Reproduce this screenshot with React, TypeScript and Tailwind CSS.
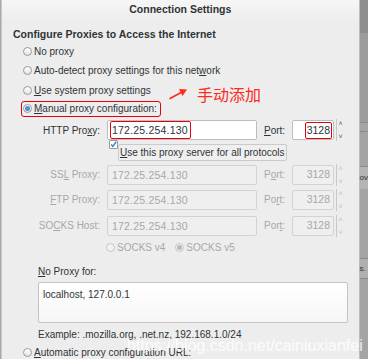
import type { ReactNode } from 'react';

const Radio = ({ on = false, dim = false }: { on?: boolean; dim?: boolean }) => (
  <span
    className={`w-[9px] h-[9px] rounded-full border shrink-0 flex items-center justify-center ${
      dim ? 'border-[#c4c4c4] bg-[#f2f2f2]' : 'border-[#9a9a9a] bg-gradient-to-b from-white to-[#e4e4e4]'
    }`}
  >
    {on && <span className={`w-[5px] h-[5px] rounded-full ${dim ? 'bg-[#b8b8b8]' : 'bg-[#4a90d9]'}`} />}
  </span>
);

const Spin = ({ dim = false }: { dim?: boolean }) => (
  <div className={`w-[8px] h-[22px] border-l border-[#c8c8c8] flex flex-col items-center justify-between text-[7px] leading-[9px] ${dim ? 'text-[#c0c0c0]' : 'text-[#555]'}`}>
    <span>˄</span>
    <span>˅</span>
  </div>
);

// Port label with its own mnemonic letter underlined
const PortLabel = ({ k }: { k: number }) => (
  <>
    {'Port:'.split('').map((c, i) =>
      i === k ? (
        <span key={i} className="underline">{c}</span>
      ) : (
        <span key={i}>{c}</span>
      )
    )}
  </>
);

function ProxyRow({ label, port, dim, red }: { label: ReactNode; port: number; dim?: boolean; red?: boolean }) {
  const txt = dim ? 'text-[#a8a8a8]' : 'text-[#2e3436]';
  const box = dim ? 'border-[#d2d2d2] bg-[#efefef]' : 'border-[#bdbdbd] bg-white';
  return (
    <div className="flex items-center h-[20px]">
      <div className={`w-[98px] text-right ${txt}`}>{label}</div>
      <div className={`ml-[7px] w-[150px] h-[20px] border rounded-[2px] ${box} flex items-center pl-[2px]`}>
        <span className={`px-[1px] leading-[16px] text-[10.5px] tracking-[0.2px] ${red ? 'border-[1.5px] border-red-600 rounded-[2px] pr-[2px]' : 'border-[1.5px] border-transparent'} ${txt}`}>
          172.25.254.130
        </span>
      </div>
      <div className={`ml-[7px] w-[28px] ${txt}`}>
        <PortLabel k={port} />
      </div>
      <div className={`w-[42px] h-[20px] border rounded-[2px] ${box} flex items-center justify-end pr-[1px]`}>
        <span className={`leading-[15px] text-[10.5px] px-[1px] ${red ? 'border-[1.5px] border-red-600 rounded-[2px]' : 'border-[1.5px] border-transparent'} ${txt}`}>
          3128
        </span>
      </div>
      <div className="ml-[2px]">
        <Spin dim={dim} />
      </div>
    </div>
  );
}

export default function App() {
  return (
    <div className="w-[368px] h-[359px] flex overflow-hidden relative bg-[#a6a6a6] font-['Liberation_Sans',Arial,sans-serif] text-[10px] text-[#2e3436]">
      <div className="w-[2px] bg-[#a9a9a9] border-r border-[#c8c8c8]" />

      {/* dialog */}
      <div className="w-[358px] bg-[#ededed] border-r border-[#bdbdbd] flex flex-col">
        <div className="h-[21px] flex items-center justify-center font-bold text-[10.5px] bg-gradient-to-b from-[#f6f6f6] to-[#ededed]">
          Connection Settings
        </div>

        <div className="mt-[7px] h-[14px] flex items-center pl-[11px] font-bold text-[10.5px]">
          Configure Proxies to Access the Internet
        </div>

        <div className="h-[20px] flex items-center pl-[21px] gap-[2px]">
          <Radio />
          <span>No proxy</span>
        </div>
        <div className="h-[19.5px] flex items-center pl-[21px] gap-[2px]">
          <Radio />
          <span>Auto-detect proxy settings for this net<span className="underline">w</span>ork</span>
        </div>
        <div className="h-[19.5px] flex items-center pl-[21px] gap-[2px]">
          <Radio />
          <span><span className="underline">U</span>se system proxy settings</span>
        </div>
        <div className="h-[19px] flex items-center pl-[19px]">
          <div className="h-[16px] w-[140px] border-[1.5px] border-red-600 rounded-[3px] flex items-center pl-[1px] gap-[2px]">
            <Radio on />
            <span><span className="underline">M</span>anual proxy configuration:</span>
          </div>
        </div>

        <div className="mt-[2px]">
          <ProxyRow red port={0} label={<>HTTP Pro<span className="underline">x</span>y:</>} />
        </div>

        <div className="h-[25px] flex items-start pl-[107px]">
          <span className="w-[9px] h-[9px] border border-[#9a9a9a] bg-white rounded-[1px] flex items-center justify-center shrink-0">
            <svg width="9" height="9" viewBox="0 0 9 9">
              <path d="M1.5 4.5 L3.6 7 L8 1" fill="none" stroke="#3d7ec5" strokeWidth="1.8" />
            </svg>
          </span>
          <div className="mt-[4px] h-[17px] border border-[#cacaca] rounded-[2px] flex items-center px-[1px] bg-[#efefef]">
            <span className="underline">U</span>se this proxy server for all protocols
          </div>
        </div>

        <ProxyRow dim port={1} label={<>SS<span className="underline">L</span> Proxy:</>} />
        <div className="h-[5px]" />
        <ProxyRow dim port={2} label={<><span className="underline">F</span>TP Proxy:</>} />
        <div className="h-[6px]" />
        <ProxyRow dim port={3} label={<>SO<span className="underline">C</span>KS Host:</>} />

        <div className="h-[14px] mt-[5px] flex items-center pl-[104px] text-[#a8a8a8]">
          <Radio dim />
          <span className="ml-[2px]">SOCKS v4</span>
          <span className="ml-[10px]"><Radio dim on /></span>
          <span className="ml-[2px]">SOCKS v5</span>
        </div>

        <div className="mt-[10px] h-[14px] flex items-center pl-[36px]">
          <span><span className="underline">N</span>o Proxy for:</span>
        </div>
        <div className="mt-[3px] ml-[36px] w-[310px] h-[42px] border border-[#c4c4c4] rounded-[2px] bg-gradient-to-b from-white to-[#f6f6f6] pl-[4px] pt-[4px]">
          localhost, 127.0.0.1
        </div>
        <div className="mt-[4px] h-[14px] flex items-center pl-[36px]">
          Example: .mozilla.org, .net.nz, 192.168.1.0/24
        </div>
        <div className="mt-[4px] h-[14px] flex items-center pl-[21px] gap-[2px]">
          <Radio />
          <span><span className="underline">A</span>utomatic proxy configuration URL:</span>
        </div>
      </div>

      {/* background window sliver */}
      <div className="flex-1 flex flex-col bg-[#a4a4a4]">
        <div className="h-[33px] bg-[#8e8e8e]" />
        <div className="h-[90px] bg-[#9c9c9c] border-b border-[#8a8a8a]" />
        <div className="h-[14px] text-[8px] leading-[14px] text-[#333]">…</div>
        <div className="h-[30px] border-b border-[#8a8a8a]" />
        <div className="h-[22px] bg-[#b4b4b4] text-[8px] leading-[22px] text-[#333]">ov</div>
        <div className="h-[70px] border-b border-[#8a8a8a]" />
        <div className="h-[20px] bg-[#b0b0b0] text-[8px] leading-[20px] text-[#333] border-b border-[#8a8a8a]">s.</div>
      </div>

      {/* annotations */}
      <svg className="absolute left-[168px] top-[86px]" width="22" height="16" viewBox="0 0 22 16">
        <path d="M2 12.5 L14 6" stroke="#ff2a1a" strokeWidth="1.6" strokeLinecap="round" />
        <path d="M11 3 L19 3.5 L14.5 10 Z" fill="#ff2a1a" />
      </svg>
      <div className="absolute left-[197px] top-[84px] text-[16px] leading-[20px] text-[#ff2a1a] font-['Noto_Sans_CJK_SC',sans-serif]">
        手动添加
      </div>
      <div className="absolute left-[127px] top-[336px] text-[16px] leading-[20px] text-white/80 font-['Liberation_Sans',Arial,sans-serif]">
        https://blog.csdn.net/cainiuxianfei
      </div>
    </div>
  );
}
